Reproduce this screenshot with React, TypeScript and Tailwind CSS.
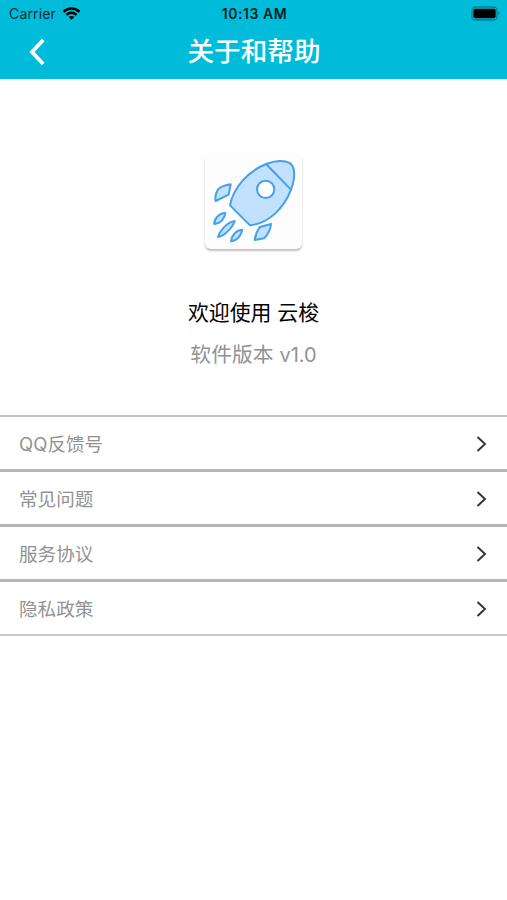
import React from "react";

const items = ["QQ反馈号", "常见问题", "服务协议", "隐私政策"];

function StatusBar() {
  return (
    <div className="grid h-[27px] grid-cols-[1fr_auto_1fr] items-center pr-[6px] pl-[9px] text-black">
      <div className="flex items-center gap-[6px]">
        <span className="text-[14px] leading-none tracking-[0.15px] text-black/80">Carrier</span>
        <svg className="mb-px" width="19" height="15" viewBox="0 0 20 15" fill="none" stroke="currentColor" strokeWidth="2.6">
          <path d="M1.6 5.7C6.3 1.1 13.7 1.1 18.4 5.7" />
          <path d="M4.6 9C7.6 6.1 12.4 6.1 15.4 9" />
          <path d="M10 14.2L6.9 11.2C8.6 9.6 11.4 9.6 13.1 11.2Z" fill="currentColor" stroke="none" />
        </svg>
      </div>
      <span className="pt-px pr-px text-center text-[14px] leading-none font-semibold tracking-[0.55px] whitespace-nowrap text-black/85">10:13 AM</span>
      <svg className="justify-self-end" width="30" height="15" viewBox="0 0 30 15">
        <rect x="1" y="1" width="25" height="13" rx="3.5" fill="none" stroke="#087f8c" strokeWidth="1.3" />
        <rect x="2.4" y="2.7" width="22.2" height="9.6" rx="1.8" fill="#000" />
        <path d="M27.4 5.2Q29.6 7.5 27.4 9.8Z" fill="#087f8c" />
      </svg>
    </div>
  );
}

function Header() {
  return (
    <header className="h-[79px] bg-[#00bcda]">
      <StatusBar />
      <div className="grid h-[48px] grid-cols-[68px_1fr_68px] items-center">
        <button className="flex justify-center pt-[2px] pl-[5px]" aria-label="返回">
          <svg width="16" height="28" viewBox="0 0 16 28" fill="none" stroke="#fff" strokeWidth="3.8">
            <path d="M14.2 2L3 14L14.2 26" />
          </svg>
        </button>
        <h1 className="pl-px text-center text-[26.6px] leading-none font-medium text-white">关于和帮助</h1>
      </div>
    </header>
  );
}

function Rocket() {
  return (
    <svg width="97" height="96" viewBox="30 24 291 288" fill="#c2e0ff" stroke="#459fec" strokeWidth="6" strokeLinejoin="round">
      <path d="M105 181C115 128 158 80 213 57C240 46 270 44 287 56C302 70 300 102 288 134C268 188 221 236 165 241Z" />
      <path d="M213 57L288 134" />
      <circle cx="212" cy="133" r="26" fill="#fff" />
      <path d="M107 118L101 149L62 168Q58 151 70 132Q84 121 107 118Z" />
      <path d="M228 237L194 246Q182 263 179 285L207 280Q226 261 228 237Z" />
      <path d="M91 204Q77 204 66 216Q57 227 58 237Q72 236 81 226Q90 215 91 204Z" />
      <path d="M119 228Q100 232 86 248Q73 262 69 276Q86 273 100 257Q115 242 119 228Z" />
      <path d="M142 254Q128 255 118 266Q109 277 108 289Q122 287 131 277Q140 266 142 254Z" />
    </svg>
  );
}

export default function App() {
  return (
    <div className="min-h-screen bg-white font-[Inter,'Noto_Sans_CJK_SC',sans-serif]">
      <Header />

      {/* app info */}
      <section className="flex h-[336px] flex-col items-center pt-[74px]">
        <div className="h-[96px] w-[97px] rounded-[6px] bg-[#fdfdfd] shadow-[0_2px_2px_rgba(0,0,0,0.25)]">
          <Rocket />
        </div>
        <p className="mt-[49px] text-[20.9px] leading-[30px] text-black">欢迎使用 云梭</p>
        <p className="mt-[12px] text-[20.8px] leading-[30px] text-[#929292]">
          软件版本 <span className="text-[20px]">v1.0</span>
        </p>
      </section>

      {/* menu */}
      <ul className="border-t-2 border-[#c4c4c4]">
        {items.map((item) => (
          <li
            key={item}
            className="flex h-[55px] items-center justify-between border-b-[3px] border-[#b5b5b5] pt-px pr-[20px] pl-[19px] last:h-[54px] last:border-b-2 last:border-[#c9c9c9]"
          >
            <span className="pt-px text-[18.6px] leading-none text-[#929292]">{item}</span>
            <svg width="11" height="16" viewBox="0 0 11 16" fill="none" stroke="#333" strokeWidth="1.9">
              <path d="M1.5 1L9 8L1.5 15" />
            </svg>
          </li>
        ))}
      </ul>
    </div>
  );
}
